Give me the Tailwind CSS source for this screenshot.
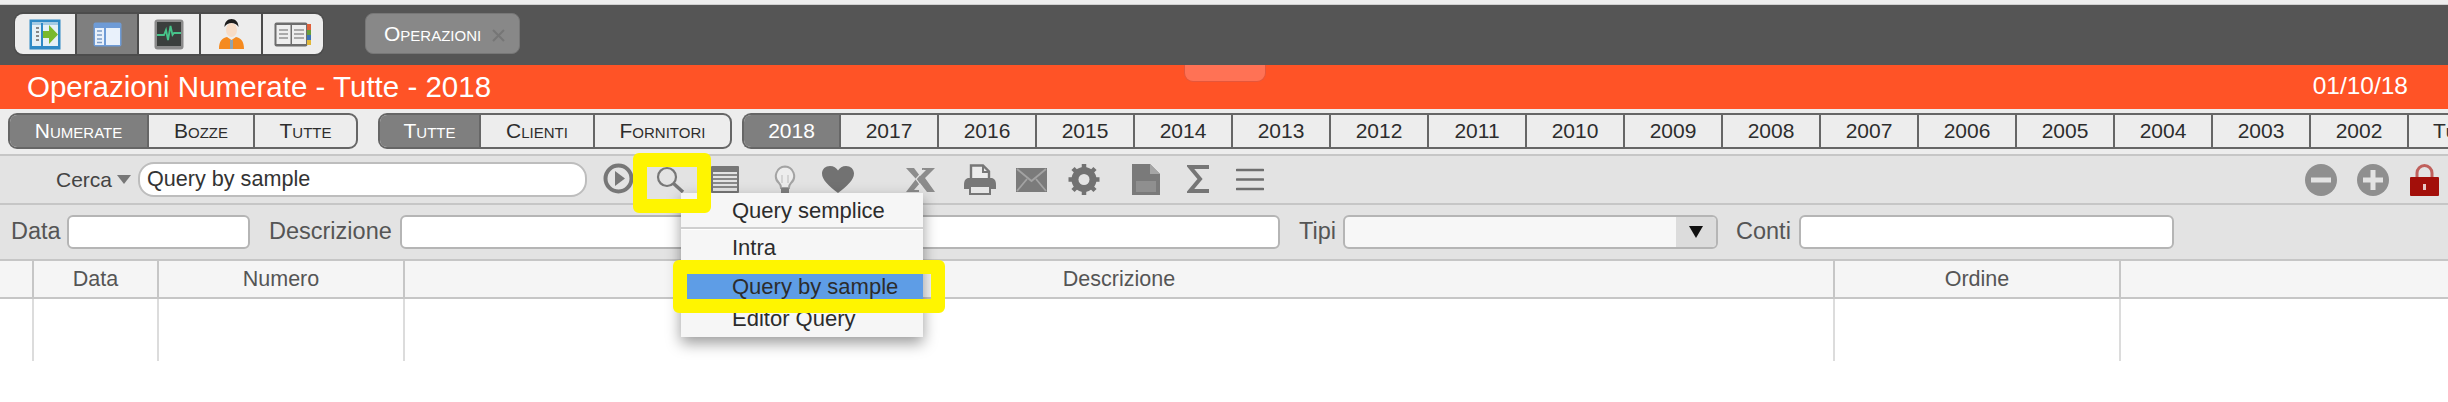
<!DOCTYPE html>
<html><head><meta charset="utf-8">
<script src="https://cdn.jsdelivr.net/npm/@tailwindcss/browser@4"></script>
<title>Operazioni</title></head>
<body class="m-0 bg-white overflow-hidden">
<div class="relative w-[2448px] h-[402px] overflow-hidden bg-white font-['Liberation_Sans',Arial,sans-serif] text-[#333]">

<div class="h-[5px] bg-[#ededed] border-b border-[#cfcfcf]"></div>

<!-- dark bar -->
<div class="h-[60px] bg-[#555] flex items-start pl-[14px] pt-[7px]">
  <div class="flex gap-[2px] h-[44px] p-[1px] rounded-[9px] bg-[#4c4c4c]">
    <div class="w-[60px] h-[40px] mt-px bg-[#ededed] rounded-l-[8px] flex items-center justify-center">
      <svg width="32" height="31" viewBox="0 0 32 31" class="blur-[0.4px]"><rect x="0.5" y="0.5" width="31" height="30" fill="#2f8ac6"/><rect x="3" y="4" width="26" height="23" fill="#e6f0f6"/><rect x="3" y="3" width="26" height="3" fill="#a5cbe4"/><rect x="12" y="4" width="2" height="23" fill="#2f8ac6"/><path d="M7 9h3M7 13h3M7 17h3M7 21h3" stroke="#888" stroke-width="2"/><path d="M14 12h6V6l9 9.5-9 9.5v-6h-6z" fill="#79b92e"/></svg>
    </div>
    <div class="w-[60px] h-[40px] mt-px bg-[#7f7f7f] flex items-center justify-center">
      <svg width="29" height="25" viewBox="0 0 29 25" class="blur-[0.4px]"><rect x="0.5" y="0.5" width="28" height="24" rx="2" fill="#6e9bd6"/><rect x="2" y="6" width="25" height="17" fill="#e9f1fb"/><rect x="11" y="6" width="2" height="17" fill="#6e9bd6"/><path d="M4 9h5M4 13h5M4 17h5M4 20.5h5" stroke="#7c9dc8" stroke-width="1.6"/></svg>
    </div>
    <div class="w-[60px] h-[40px] mt-px bg-[#ededed] flex items-center justify-center">
      <svg width="30" height="31" viewBox="0 0 30 31" class="blur-[0.4px]"><rect x="0.5" y="0.5" width="29" height="30" rx="3" fill="#8a8a8a"/><rect x="3" y="3" width="24" height="24" fill="#3b3f3d"/><path d="M3 16h7l2-5 2 10 2.500-14 2 9 1.500-2h7" fill="none" stroke="#47c48a" stroke-width="1.800"/></svg>
    </div>
    <div class="w-[60px] h-[40px] mt-px bg-[#ededed] flex items-center justify-center">
      <svg width="25" height="30" viewBox="0 0 25 30" class="blur-[0.3px]"><path d="M0 30c0-8 3-11 8-12l4.500 3 4.500-3c5 1 8 4 8 12z" fill="#f58a1f"/><path d="M11 21h3v9h-3z" fill="#8fa3b0"/><ellipse cx="12.500" cy="11" rx="5.500" ry="7" fill="#f7dcc6"/><path d="M5.500 8c0-5 3-8 7-8s7 3 7 8c-2-3-4-4-7-4s-5 1-7 4z" fill="#1d1d1d"/></svg>
    </div>
    <div class="w-[60px] h-[40px] mt-px bg-[#ededed] rounded-r-[8px] flex items-center justify-center">
      <svg width="38" height="25" viewBox="0 0 38 25" class="blur-[0.4px]"><rect x="0.500" y="0.500" width="33" height="24" rx="2" fill="#6d6d6d"/><rect x="2.500" y="3" width="14" height="19" fill="#eee"/><rect x="18" y="3" width="14" height="19" fill="#eee"/><path d="M5 8h9M5 12h9M5 16h9M20 8h10M20 12h10M20 16h10" stroke="#aaa" stroke-width="2"/><rect x="33" y="2" width="4" height="6" fill="#e0603a"/><rect x="33" y="8" width="4" height="5" fill="#6a9e3b"/><rect x="33" y="13" width="4" height="5" fill="#3c74b5"/><rect x="33" y="18" width="4" height="5" fill="#e0b83a"/></svg>
    </div>
  </div>
  <div class="ml-[41px] mt-px h-[41px] w-[155px] rounded-[8px] bg-[#888] border border-[#777] flex items-center pl-[18px] text-white text-[21px] [font-variant:small-caps]">
    <span>Operazioni</span>
    <svg width="13" height="13" viewBox="0 0 13 13" class="ml-[11px] mt-[3px]"><path d="M1 1l11 11M12 1L1 12" stroke="#767676" stroke-width="2"/></svg>
  </div>
</div>

<!-- orange title -->
<div class="relative h-[44px] bg-[#ff5326] flex items-center justify-between pl-[27px] pr-[40px] text-white">
  <span class="text-[29.500px] leading-none">Operazioni Numerate - Tutte - 2018</span>
  <span class="text-[24.500px] leading-none mb-[2px]">01/10/18</span>
  <div class="absolute left-[1184px] top-0 w-[82px] h-[17px] bg-[#ff7255] rounded-b-[9px] border-b border-x border-[#e5563a]"></div>
</div>

<!-- segmented row -->
<div class="h-[47px] bg-[#ededed] border-b-2 border-[#c6c6c6] flex items-start pt-[4px] pl-[8px] overflow-hidden text-[21px] text-[#2d2d2d]">
  <div class="flex h-[36px] w-[350px] shrink-0 border-2 border-[#666] rounded-[9px] overflow-hidden [font-variant:small-caps] items-stretch">
    <div class="w-[139px] bg-[#7f7f7f] text-white flex items-center justify-center border-r-2 border-[#666]">Numerate</div>
    <div class="w-[106px] flex items-center justify-center border-r-2 border-[#666]">Bozze</div>
    <div class="flex-1 flex items-center justify-center">Tutte</div>
  </div>
  <div class="flex h-[36px] w-[354px] ml-[20px] shrink-0 border-2 border-[#666] rounded-[9px] overflow-hidden [font-variant:small-caps] items-stretch">
    <div class="w-[101px] bg-[#7f7f7f] text-white flex items-center justify-center border-r-2 border-[#666]">Tutte</div>
    <div class="w-[114px] flex items-center justify-center border-r-2 border-[#666]">Clienti</div>
    <div class="flex-1 flex items-center justify-center">Fornitori</div>
  </div>
  <div class="flex h-[36px] ml-[10px] shrink-0 border-y-2 border-l-2 border-[#666] rounded-l-[9px] items-stretch overflow-hidden">
    <div class="w-[97px] bg-[#7f7f7f] text-white flex items-center justify-center border-r-2 border-[#666]">2018</div>
    <div class="w-[98px] flex items-center justify-center border-r-2 border-[#666]">2017</div>
    <div class="w-[98px] flex items-center justify-center border-r-2 border-[#666]">2016</div>
    <div class="w-[98px] flex items-center justify-center border-r-2 border-[#666]">2015</div>
    <div class="w-[98px] flex items-center justify-center border-r-2 border-[#666]">2014</div>
    <div class="w-[98px] flex items-center justify-center border-r-2 border-[#666]">2013</div>
    <div class="w-[98px] flex items-center justify-center border-r-2 border-[#666]">2012</div>
    <div class="w-[98px] flex items-center justify-center border-r-2 border-[#666]">2011</div>
    <div class="w-[98px] flex items-center justify-center border-r-2 border-[#666]">2010</div>
    <div class="w-[98px] flex items-center justify-center border-r-2 border-[#666]">2009</div>
    <div class="w-[98px] flex items-center justify-center border-r-2 border-[#666]">2008</div>
    <div class="w-[98px] flex items-center justify-center border-r-2 border-[#666]">2007</div>
    <div class="w-[98px] flex items-center justify-center border-r-2 border-[#666]">2006</div>
    <div class="w-[98px] flex items-center justify-center border-r-2 border-[#666]">2005</div>
    <div class="w-[98px] flex items-center justify-center border-r-2 border-[#666]">2004</div>
    <div class="w-[98px] flex items-center justify-center border-r-2 border-[#666]">2003</div>
    <div class="w-[98px] flex items-center justify-center border-r-2 border-[#666]">2002</div>
    <div class="w-[98px] flex items-center pl-[24px] [font-variant:small-caps]">Tutti</div>
  </div>
</div>

<!-- toolbar -->
<div class="h-[49px] bg-[#e3e3e3] flex items-center pl-[56px] pr-[9px] border-b-2 border-[#c6c6c6]">
  <span class="w-[57px] text-[21px] text-[#444]">Cerca</span>
  <svg width="14" height="9" viewBox="0 0 14 9" class="ml-[4px]"><path d="M0 0h14L7 9z" fill="#777"/></svg>
  <div class="ml-[7px] w-[449px] h-[35px] rounded-[16px] bg-white border-2 border-[#bdbdbd] flex items-center pl-[7px] text-[21.600px] text-[#333]">Query by sample</div>
  <svg width="31" height="31" viewBox="0 0 31 31" class="ml-[16px] -mt-[2px] blur-[0.4px]"><circle cx="15.500" cy="15.500" r="13" fill="none" stroke="#777" stroke-width="4"/><path d="M12 8l10 7.500-10 7.500z" fill="#777"/></svg>
  <svg width="29" height="28" viewBox="0 0 29 28" class="ml-[22px] mt-[1px] blur-[0.3px]"><circle cx="11" cy="11" r="9" fill="none" stroke="#777" stroke-width="2.200"/><path d="M17.500 17.500L27 26" stroke="#777" stroke-width="3.500"/></svg>
  <svg width="28" height="27" viewBox="0 0 28 27" class="ml-[26px] blur-[0.4px]"><rect x="0" y="0" width="28" height="27" rx="1" fill="#777"/><rect x="2" y="6" width="24" height="19" fill="#e3e3e3"/><path d="M2 9h24M2 13h24M2 17h24M2 21h24" stroke="#888" stroke-width="2"/></svg>
  <svg width="22" height="30" viewBox="0 0 22 30" class="ml-[35px] blur-[0.4px]"><path d="M11 1.500a9.500 9.500 0 0 0-6 16.500c1.500 1.500 2 3 2 5h8c0-2 .5-3.500 2-5a9.500 9.500 0 0 0-6-16.500z" fill="#ededed" stroke="#a3a3a3" stroke-width="2"/><path d="M8 18V10M14 18V10" stroke="#bbb"/><rect x="7" y="23" width="8" height="6" rx="1" fill="#808080"/></svg>
  <svg width="32" height="27" viewBox="0 0 32 27" class="ml-[26px] blur-[0.3px]"><path d="M16 27C7 20 0 14 0 7.500 0 3 3.500 0 8 0c3.500 0 6.500 2 8 4.500C17.500 2 20.500 0 24 0c4.500 0 8 3 8 7.500C32 14 25 20 16 27z" fill="#727272"/></svg>
  <svg width="31" height="26" viewBox="0 0 31 26" class="ml-[51px] blur-[0.4px]"><path d="M1 1h8l6 8 6-6h-4V1h13l-10 10 10 14H22l-7-9-6 7h5v2H1l10-13z" fill="#8c8c8c"/><path d="M19 3l-8 9 8 11" fill="none" stroke="#e3e3e3" stroke-width="1.200"/></svg>
  <svg width="32" height="31" viewBox="0 0 32 31" class="ml-[28px] blur-[0.4px]"><path d="M7 14V1.500h12l6 6V14" fill="#ececec" stroke="#777" stroke-width="2.400"/><path d="M19 1.500V8h6" fill="none" stroke="#777" stroke-width="2"/><path d="M0 21c0-5 2-7 5-7h22c3 0 5 2 5 7v4H0z" fill="#777"/><rect x="6" y="22" width="20" height="8" fill="#e6e6e6" stroke="#777" stroke-width="2"/></svg>
  <svg width="31" height="24" viewBox="0 0 31 24" class="ml-[20px] blur-[0.4px]"><rect width="31" height="24" fill="#7b7b7b"/><path d="M1 1l14.500 12L30 1M1 23l10-12M30 23L20 11" fill="none" stroke="#a3a3a3" stroke-width="1.800"/></svg>
  <svg width="32" height="31" viewBox="0 0 32 31" class="ml-[21px] blur-[0.3px]"><circle cx="16" cy="15.500" r="9" fill="none" stroke="#727272" stroke-width="7"/><path d="M16 0v31M.5 15.500h31M5 4.500l22 22M27 4.500l-22 22" stroke="#727272" stroke-width="4.500"/><circle cx="16" cy="15.500" r="5.500" fill="#e3e3e3"/></svg>
  <svg width="28" height="31" viewBox="0 0 28 31" class="ml-[32px] blur-[0.3px]"><path d="M0 0h18l10 10v21H0z" fill="#7a7a7a"/><path d="M18 0v10h10z" fill="#a5a5a5"/><rect x="4" y="17" width="20" height="11" fill="#8f8f8f"/></svg>
  <svg width="23" height="31" viewBox="0 0 23 31" class="ml-[27px] blur-[0.3px]"><path d="M22 3H3l10 12L3 27h19" fill="none" stroke="#767676" stroke-width="4"/></svg>
  <svg width="28" height="23" viewBox="0 0 28 23" class="ml-[26px] blur-[0.3px]"><path d="M1 2h26M1 11.500h26M1 21h26" stroke="#6f6f6f" stroke-width="2.600" stroke-linecap="round"/></svg>

  <svg width="32" height="32" viewBox="0 0 32 32" class="ml-auto blur-[0.3px]"><circle cx="16" cy="16" r="16" fill="#8f8f8f"/><rect x="6" y="13.500" width="20" height="5" fill="#e3e3e3"/></svg>
  <svg width="32" height="32" viewBox="0 0 32 32" class="ml-[20px] blur-[0.3px]"><circle cx="16" cy="16" r="16" fill="#8f8f8f"/><path d="M6 16h20M16 6v20" stroke="#e3e3e3" stroke-width="5"/></svg>
  <svg width="29" height="32" viewBox="0 0 29 32" class="ml-[21px] blur-[0.3px]"><path d="M7 14V9a7.500 7.500 0 0 1 15 0v5" fill="none" stroke="#c0605c" stroke-width="3"/><rect y="13" width="29" height="19" rx="1" fill="#a30f0a"/><rect x="13" y="20" width="3" height="6" fill="#e7c7c5"/></svg>
</div>

<!-- filters -->
<div class="h-[56px] bg-[#e3e3e3] border-b-2 border-[#c6c6c6] flex items-center pl-[11px] text-[23.500px] text-[#555]">
  <span class="w-[56px]">Data</span>
  <div class="w-[183px] h-[34px] bg-white rounded-[6px] border-2 border-[#b5b5b5]"></div>
  <span class="ml-[19px] w-[131px]">Descrizione</span>
  <div class="w-[880px] h-[34px] bg-white rounded-[6px] border-2 border-[#b5b5b5]"></div>
  <span class="ml-[19px] w-[44px]">Tipi</span>
  <div class="w-[375px] h-[34px] bg-[#f7f7f7] rounded-[6px] border-2 border-[#b5b5b5] flex justify-end overflow-hidden">
    <div class="w-[40px] bg-[#dcdcdc] flex items-center justify-center"><svg width="14" height="12" viewBox="0 0 14 12"><path d="M0 0h14L7 12z" fill="#111"/></svg></div>
  </div>
  <span class="ml-[18px] w-[63px]">Conti</span>
  <div class="w-[375px] h-[34px] bg-white rounded-[6px] border-2 border-[#b5b5b5]"></div>
</div>

<!-- table header -->
<div class="h-[38px] bg-[#f5f5f5] border-b-2 border-[#c6c6c6] flex items-stretch text-[21.500px] text-[#555]">
  <div class="w-[34px] border-r-2 border-[#c6c6c6]"></div>
  <div class="w-[125px] border-r-2 border-[#c6c6c6] flex items-center justify-center">Data</div>
  <div class="w-[246px] border-r-2 border-[#c6c6c6] flex items-center justify-center">Numero</div>
  <div class="w-[1430px] border-r-2 border-[#c6c6c6] flex items-center justify-center">Descrizione</div>
  <div class="w-[286px] border-r-2 border-[#c6c6c6] flex items-center justify-center">Ordine</div>
</div>
<!-- table body -->
<div class="h-[62px] flex items-stretch">
  <div class="w-[34px] border-r-2 border-[#dcdcdc]"></div>
  <div class="w-[125px] border-r-2 border-[#dcdcdc]"></div>
  <div class="w-[246px] border-r-2 border-[#dcdcdc]"></div>
  <div class="w-[1430px] border-r-2 border-[#dcdcdc]"></div>
  <div class="w-[286px] border-r-2 border-[#dcdcdc]"></div>
</div>

<!-- menu -->
<div class="absolute left-[681px] top-[193px] w-[242px] h-[144px] bg-[#f6f6f6] shadow-[0_6px_14px_rgba(0,0,0,0.4)] text-[22px] text-[#2c2c2c] flex flex-col">
  <div class="h-[34px] pl-[51px] flex items-center">Query semplice</div>
  <div class="h-[3px] bg-[#cfcfcf] border-b border-white"></div>
  <div class="h-[34px] pl-[51px] flex items-center">Intra</div>
  <div class="h-[25px] mt-[10px] bg-[#5e9de6] pl-[51px] flex items-center">Query by sample</div>
  <div class="flex-1 pl-[51px] flex items-center">Editor Query</div>
</div>

<!-- yellow highlights -->
<div class="absolute left-[633px] top-[153px] w-[78px] h-[60px] border-[14px] border-[#fff500] rounded-[6px]"></div>
<div class="absolute left-[673px] top-[260px] w-[272px] h-[53px] border-[14px] border-[#fff500] rounded-[6px]"></div>
</div>
</body></html>
